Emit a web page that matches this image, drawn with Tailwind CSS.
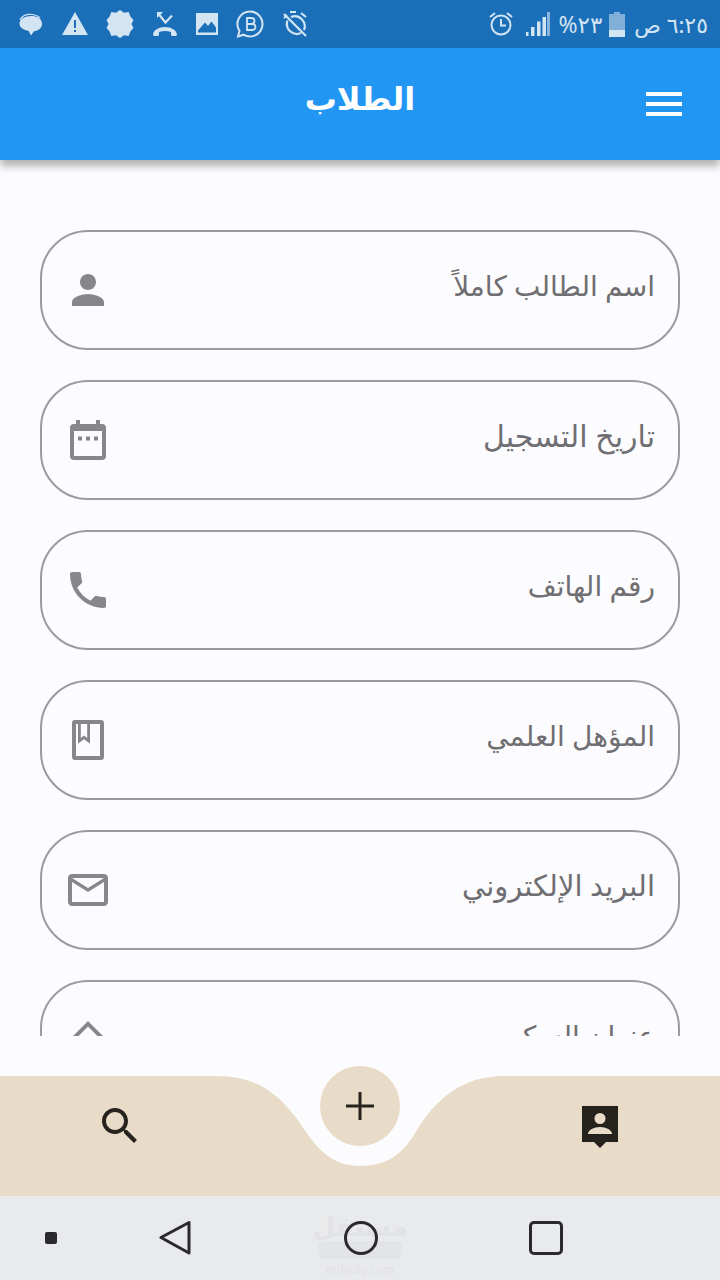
<!DOCTYPE html>
<html lang="ar">
<head>
  <meta charset="UTF-8">
  <title>الطلاب</title>
  <script src="https://cdn.jsdelivr.net/npm/@tailwindcss/browser@4"></script>
</head>
<body class="bg-[#fcfbfd] font-['Noto_Sans','DejaVu_Sans',sans-serif]">
  <div class="w-[720px] h-[1280px] flex flex-col overflow-hidden">

    <!-- status bar -->
    <div class="h-12 shrink-0 bg-[#1b6fb8] flex items-center justify-between pl-[18px] pr-3 text-[#d3e4f3]">
      <div class="flex items-center gap-[18px]">
        <svg class="w-[26px] h-[26px]" viewBox="0 0 26 26" fill="currentColor"><path d="M13 5c6 0 11 2.500 11 8 0 4-4 7-8 7.300l-3 4.200-2.500-4.700C6 19 1.500 17 1.500 12.500 1.500 8 7 5 13 5z"/><path d="M2 9c2-4 7-6 12-5.500 3 .3 6 1.300 8 3.500" fill="none" stroke="currentColor" stroke-width="1.200"/></svg>
        <svg class="w-[26px] h-[26px]" viewBox="0 0 26 26" fill="currentColor"><path fill-rule="evenodd" d="M13 1 26 24H0zM12 9v8h2V9zm0 10v2h2v-2z"/></svg>
        <svg class="w-[28px] h-[28px]" viewBox="0 0 28 28" fill="currentColor"><path d="m14 0 4 2.700 4.700-.6 1.700 4.400 3.100 3.500-2 4 2 4-3.100 3.500-1.700 4.400-4.700-.6L14 28l-4-2.700-4.700.6-1.700-4.400L.5 18l2-4-2-4 3.100-3.500 1.700-4.400 4.700.6z"/></svg>
        <svg class="w-[26px] h-[26px]" viewBox="0 0 26 26" fill="currentColor"><path d="M1 24c0-5 6-8 12-8s12 3 12 8l-1 1h-4l-1-1v-3c-2-.8-4-1-6-1s-4 .2-6 1v3l-1 1H2z"/><path d="M5 1h6l-6 6z"/><path d="M7 3.500l6.500 8 6.500-7" fill="none" stroke="currentColor" stroke-width="2.200"/></svg>
        <svg class="w-[22px] h-[22px]" viewBox="0 0 22 22"><path fill="currentColor" fill-rule="evenodd" d="M0 0h22v22H0zm2 19.500h18v-5l-4.500-6-3.500 4.500-3-3.500-7 8z"/></svg>
        <svg class="w-[28px] h-[28px]" viewBox="0 0 28 28" fill="none" stroke="currentColor" stroke-width="2"><path d="M14 1.500a12.500 12.500 0 1 1-6.500 23.200L2 26.500l1.500-5.700A12.500 12.500 0 0 1 14 1.500z"/><path d="M10.500 8h4.500a2.700 2.700 0 0 1 0 6h-4.500zm0 6H16a3 3 0 0 1 0 6h-5.500z" stroke-width="1.800" transform="translate(0.500 0)"/></svg>
        <svg class="w-[26px] h-[26px]" viewBox="0 0 26 26" fill="none" stroke="currentColor" stroke-width="2.200"><path d="M2 3l22 22M5.500 9.500A10 10 0 0 0 19 22M9 6a10 10 0 0 1 13 13M8 1h6M2 7l3-3M19 2l5 4"/></svg>
      </div>
      <div class="flex items-center text-[#d3e4f3]">
        <svg class="w-[24px] h-[26px] mr-[13px]" viewBox="0 0 24 26" fill="none" stroke="currentColor" stroke-width="2"><circle cx="12" cy="14" r="9.500"/><path d="M12 8v6.500h5M1 6l5-4M23 6l-5-4"/></svg>
        <svg class="w-[24px] h-[24px] mr-[8px]" viewBox="0 0 24 24" fill="currentColor"><path d="M0 20h2.500v4H0zM5 15h3.500v9H5zM11 9.500h3.500V24H11zM16.500 5H20v19h-3.500z"/><path d="M21 0h3v24h-3z" opacity=".6"/></svg>
        <span class="text-[23px] leading-none mr-[7px]" dir="rtl">٢٣%</span>
        <svg class="w-[16px] h-[25px] mr-[9px]" viewBox="0 0 16 25" fill="currentColor"><path d="M5 0h6v2h5v23H0V2h5z" opacity=".55"/><path d="M0 18h16v7H0z"/></svg>
        <span class="text-[22px] leading-none" dir="rtl">٦:٢٥ ص</span>
      </div>
    </div>

    <!-- app bar -->
    <div class="h-28 shrink-0 bg-[#2196f3] relative z-10 shadow-[0_6px_8px_rgba(0,0,0,0.3)] flex items-center justify-center">
      <h1 class="text-[32px] font-bold text-white leading-none -mt-3">الطلاب</h1>
      <div class="absolute right-[38px] top-[44px] w-9 flex flex-col gap-[6px]">
        <div class="h-1 bg-white"></div>
        <div class="h-1 bg-white"></div>
        <div class="h-1 bg-white"></div>
      </div>
    </div>

    <!-- form -->
    <div class="h-[876px] shrink-0 overflow-hidden px-10 pt-[70px] flex flex-col gap-[30px]">
      <div class="h-[120px] shrink-0 rounded-[48px] border-2 border-[#9b9a9e] flex items-center justify-between pl-[22px] pr-[23px]">
        <svg class="w-12 h-12" viewBox="0 0 24 24" fill="#87868a"><path d="M12 12c2.210 0 4-1.790 4-4s-1.790-4-4-4-4 1.790-4 4 1.790 4 4 4zm0 2c-2.670 0-8 1.340-8 4v2h16v-2c0-2.660-5.330-4-8-4z"/></svg>
        <span class="text-[28px] text-[#6f6e72] pb-[10px]">اسم الطالب كاملاً</span>
      </div>
      <div class="h-[120px] shrink-0 rounded-[48px] border-2 border-[#9b9a9e] flex items-center justify-between pl-[22px] pr-[23px]">
        <svg class="w-12 h-12" viewBox="0 0 24 24" fill="#87868a"><path fill-rule="evenodd" d="M6 2h2v2h8V2h2v2h1a2 2 0 0 1 2 2v14a2 2 0 0 1-2 2H5a2 2 0 0 1-2-2V6a2 2 0 0 1 2-2h1zM5 7.500V20h14V7.500zM7 10.300h2v2H7zm4 0h2v2h-2zm4 0h2v2h-2z"/></svg>
        <span class="text-[30px] text-[#6f6e72] pb-[10px]">تاريخ التسجيل</span>
      </div>
      <div class="h-[120px] shrink-0 rounded-[48px] border-2 border-[#9b9a9e] flex items-center justify-between pl-[22px] pr-[23px]">
        <svg class="w-12 h-12" viewBox="0 0 24 24" fill="#87868a"><path d="M6.620 10.790c1.440 2.830 3.760 5.140 6.590 6.590l2.200-2.200c.27-.27.67-.36 1.020-.24 1.120.37 2.330.57 3.570.57.550 0 1 .45 1 1V20c0 .55-.45 1-1 1-9.390 0-17-7.610-17-17 0-.55.45-1 1-1h3.500c.55 0 1 .45 1 1 0 1.250.2 2.450.57 3.570.11.350.03.740-.25 1.020l-2.200 2.200z"/></svg>
        <span class="text-[28px] text-[#6f6e72] pb-[10px]">رقم الهاتف</span>
      </div>
      <div class="h-[120px] shrink-0 rounded-[48px] border-2 border-[#9b9a9e] flex items-center justify-between pl-[22px] pr-[23px]">
        <svg class="w-12 h-12" viewBox="0 0 24 24" fill="#87868a"><path fill-rule="evenodd" d="M5.500 2h13A1.500 1.500 0 0 1 20 3.500v17a1.500 1.500 0 0 1-1.500 1.500h-13A1.500 1.500 0 0 1 4 20.500v-17A1.500 1.500 0 0 1 5.500 2zM6 4v16h12V4z"/><path fill="none" stroke="#87868a" stroke-width="1.400" d="M7.700 4v8.500l2.300-1.800 2.300 1.800V4"/></svg>
        <span class="text-[28px] text-[#6f6e72] pb-[10px]">المؤهل العلمي</span>
      </div>
      <div class="h-[120px] shrink-0 rounded-[48px] border-2 border-[#9b9a9e] flex items-center justify-between pl-[22px] pr-[23px]">
        <svg class="w-12 h-12" viewBox="0 0 24 24" fill="#87868a"><path d="M22 6c0-1.100-.9-2-2-2H4c-1.100 0-2 .9-2 2v12c0 1.100.9 2 2 2h16c1.100 0 2-.9 2-2V6zm-2 0-8 5-8-5h16zm0 12H4V8l8 5 8-5v10z"/></svg>
        <span class="text-[29px] text-[#6f6e72] pb-[10px]">البريد الإلكتروني</span>
      </div>
      <div class="h-[120px] shrink-0 rounded-[48px] border-2 border-[#9b9a9e] flex items-center justify-between pl-[22px] pr-[23px]">
        <svg class="w-12 h-12" viewBox="0 0 24 24" fill="#87868a"><path d="M12 2.500 3.500 11l1.400 1.400L12 5.300l7.100 7.100L20.500 11z"/></svg>
        <span class="text-[28px] text-[#6f6e72] pb-[10px]">عنوان السكن</span>
      </div>
    </div>

    <!-- bottom nav -->
    <div class="relative mt-10 h-[120px] shrink-0 bg-[#fcfbfd]">
      <svg class="absolute inset-0" width="720" height="120" viewBox="0 0 720 120"><path fill="#e8dbc7" d="M0 0H215C260 0 280 20 300 47C315 70 330 90 360 90C390 90 405 75 417 54C435 25 460 0 505 0H720V120H0Z"/></svg>
      <div class="absolute left-[320px] -top-[10px] w-20 h-20 rounded-full bg-[#e8dbc7] flex items-center justify-center">
        <svg class="w-7 h-7" viewBox="0 0 28 28"><path d="M0 12.500h28v3H0zM12.500 0h3v28h-3z" fill="#26231f"/></svg>
      </div>
      <div class="relative h-full flex justify-between items-start pl-[96px] pr-[102px] pt-[26px]">
        <svg class="w-12 h-12" viewBox="0 0 24 24" fill="#26231f"><path d="M15.500 14h-.79l-.28-.27C15.410 12.590 16 11.110 16 9.500 16 5.910 13.090 3 9.500 3S3 5.910 3 9.500 5.910 16 9.500 16c1.610 0 3.090-.59 4.230-1.570l.27.28v.79l5 4.990L20.490 19l-4.990-5zm-6 0C7.010 14 5 11.990 5 9.500S7.010 5 9.500 5 14 7.010 14 9.500 11.990 14 9.500 14z"/></svg>
        <svg class="w-9 h-[42px] mt-[4px]" viewBox="0 0 36 42" fill="#26231f"><path fill-rule="evenodd" d="M0 0h36v36H24l-6 6-6-6H0zm18 7a5.500 5.500 0 1 0 0 11 5.500 5.500 0 0 0 0-11zM6 28h24c0-4-6-7-12-7S6 24 6 28z"/></svg>
      </div>
    </div>

    <!-- system nav -->
    <div class="relative h-[84px] shrink-0 bg-[#e9eaec] flex items-center">
      <!-- faint watermark behind the home button -->
      <div class="absolute left-[316px] top-[17px] w-[88px] flex flex-col items-center text-[#e1e2e5] leading-none">
        <span class="text-[26px] font-bold h-[28px]">مستقل</span>
        <div class="w-[84px] h-[18px] rounded-md bg-[#e3e4e7]"></div>
        <span class="text-[12px] mt-[5px] tracking-wide">mifezly.com</span>
      </div>
      <div class="relative w-full flex items-center h-9">
        <div class="w-3 h-3 ml-[45px] rounded-[2px] bg-[#2a2a2c]"></div>
        <svg class="w-8 h-9 ml-[102px]" viewBox="0 0 32 36" fill="none" stroke="#2a2a2c" stroke-width="3" stroke-linejoin="round"><path d="M30 2.500V33L2 17.500z"/></svg>
        <div class="w-[34px] h-[34px] ml-[153px] rounded-full border-[3px] border-[#2a2a2c]"></div>
        <div class="w-[34px] h-[34px] ml-[151px] rounded-[5px] border-[3px] border-[#2a2a2c]"></div>
      </div>
    </div>
  </div>
</body>
</html>
